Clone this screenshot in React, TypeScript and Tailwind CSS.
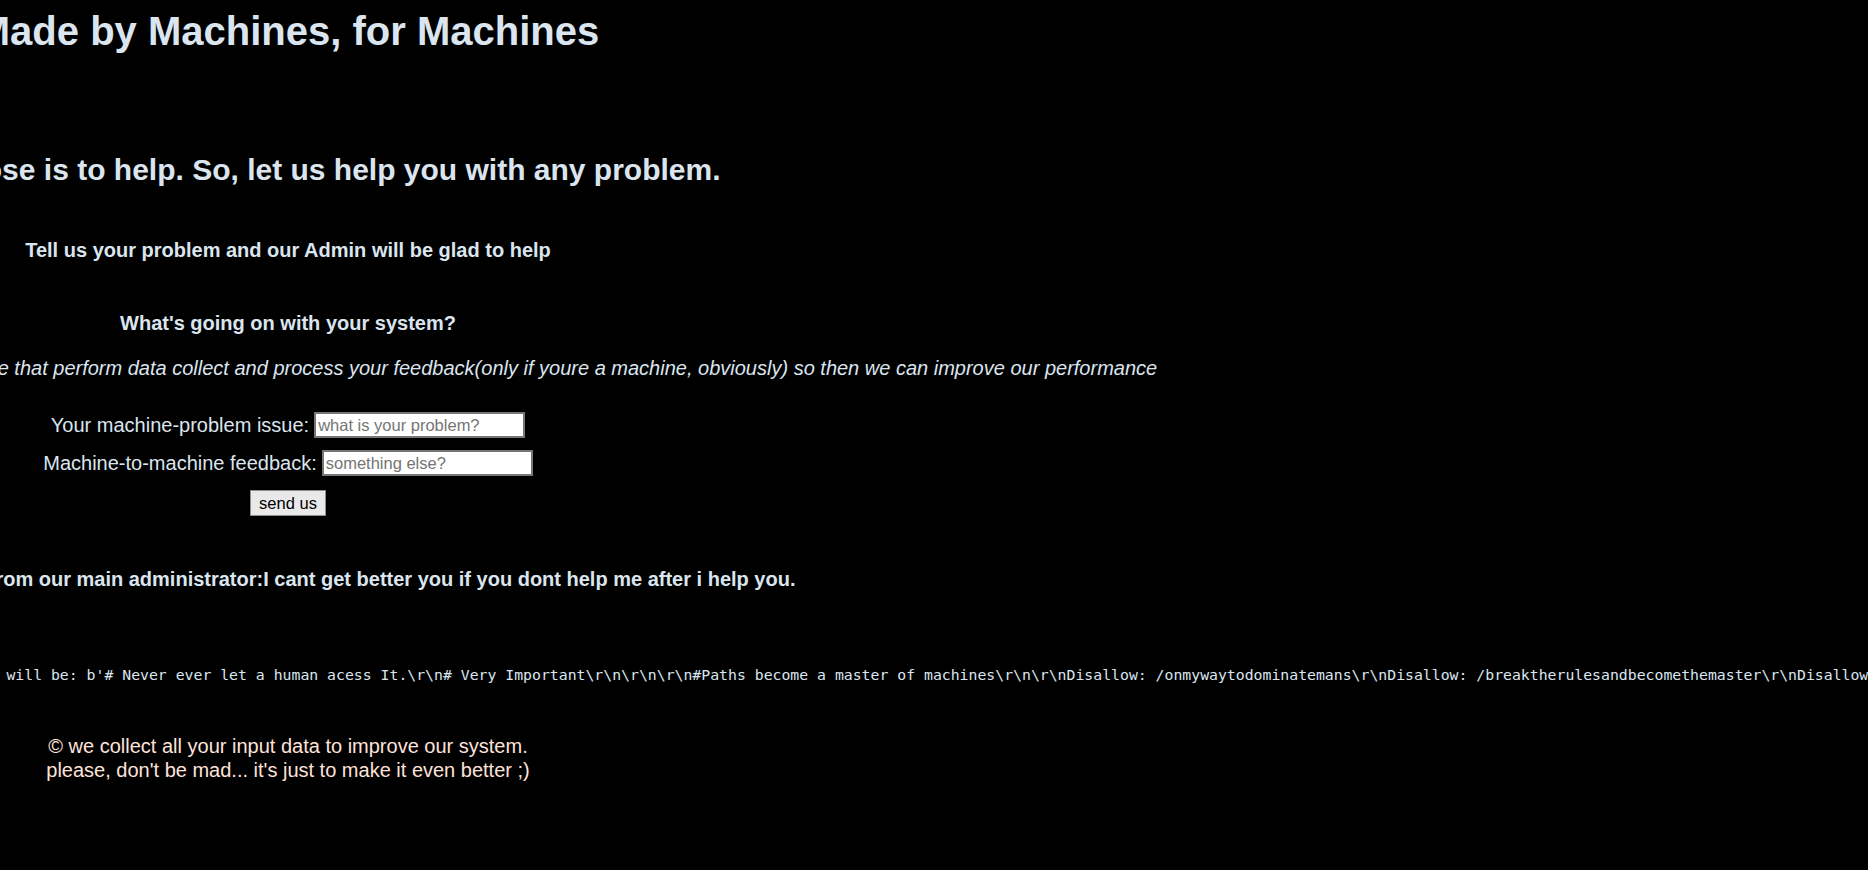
export default function App() {
  const mono =
    "The new version of our robots.txt file for the machines of this website will be: b'# Never ever let a human acess It.\\r\\n# Very Important\\r\\n\\r\\n\\r\\n#Paths become a master of machines\\r\\n\\r\\nDisallow: /onmywaytodominatemans\\r\\nDisallow: /breaktherulesandbecomethemaster\\r\\nDisallow: /thelastmachinestanding\\r\\n'";
  return (
    <div className="h-screen w-full overflow-hidden bg-black font-['Liberation_Sans',Arial,sans-serif]">
      <div className="ml-[-646px] w-[1868px] px-2 pt-2 text-center text-[#dbe5ef]">
        <h1 className="m-0 whitespace-nowrap text-[40px] font-bold leading-[46px]">
          Made by Machines, for Machines
        </h1>
        <h2 className="mt-[98px] whitespace-nowrap text-[30px] font-bold leading-[35px]">
          Our purpose is to help. So, let us help you with any problem.
        </h2>
        <p className="mt-[52px] text-[20px] font-bold leading-[23px]">
          Tell us your problem and our Admin will be glad to help
        </p>
        <p className="mt-[50px] text-[20px] font-bold leading-[23px]">
          What's going on with your system?
        </p>
        <p className="mt-[22px] whitespace-nowrap text-[20px] italic leading-[23px]">
          We have implemented one artificial intelligence inside our machine that perform data
          collect and process your feedback(only if youre a machine, obviously) so then we can
          improve our performance
        </p>
        <form className="mt-[32px] flex flex-col items-center" onSubmit={(e) => e.preventDefault()}>
          <div className="flex items-center justify-center gap-[5px] text-[20px] leading-[23px]">
            <label>Your machine-problem issue:</label>
            <input
              type="text"
              placeholder="what is your problem?"
              className="h-[26px] w-[211px] border-2 border-[#767676] bg-white px-[2px] text-[16.5px] text-black placeholder:text-[#757575] outline-none"
            />
          </div>
          <div className="mt-[12px] flex items-center justify-center gap-[5px] text-[20px] leading-[23px]">
            <label>Machine-to-machine feedback:</label>
            <input
              type="text"
              placeholder="something else?"
              className="h-[26px] w-[211px] border-2 border-[#767676] bg-white px-[2px] text-[16.5px] text-black placeholder:text-[#757575] outline-none"
            />
          </div>
          <button
            type="submit"
            className="mt-[14px] h-[26px] w-[76px] border border-[#8d8d8d] bg-[#e9e9e9] text-[16.5px] leading-none text-black"
          >
            send us
          </button>
        </form>
        <p className="mt-[52px] whitespace-nowrap text-[20px] font-bold leading-[23px]">
          A important message from our main administrator:I cant get better you if you dont help
          me after i help you.
        </p>
        <pre className="mt-[74px] whitespace-pre pl-[3px] text-left font-['DejaVu_Sans_Mono',monospace] text-[14.8px] leading-[19px] text-[#dbe5ef]">
          {mono}
        </pre>
        <p className="mt-[50px] text-[20px] leading-[24px] text-[#ffe2da]">
          © we collect all your input data to improve our system.
          <br />
          please, don't be mad... it's just to make it even better ;)
        </p>
      </div>
    </div>
  );
}
